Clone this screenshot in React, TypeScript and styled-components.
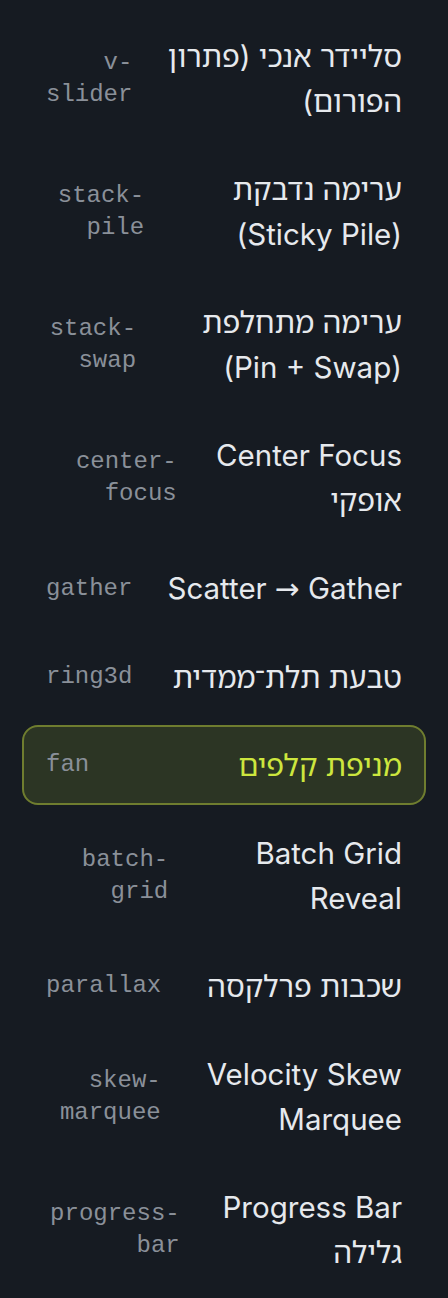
import type { ReactNode } from 'react'
import styled, { createGlobalStyle } from 'styled-components'

const GlobalStyle = createGlobalStyle`
  html, body {
    margin: 0;
    padding: 0;
    background: #161b22;
  }
  * {
    box-sizing: border-box;
  }
`

const Arrow = styled.span`
  font-family: Roboto, 'DejaVu Sans', sans-serif;
`

type Demo = {
  slug: string
  title: ReactNode
}

const demos: Demo[] = [
  { slug: 'v-slider', title: 'סליידר אנכי (פתרון הפורום)' },
  { slug: 'stack-pile', title: 'ערימה נדבקת (Sticky Pile)' },
  { slug: 'stack-swap', title: 'ערימה מתחלפת (Pin + Swap)' },
  { slug: 'center-focus', title: 'Center Focus אופקי' },
  {
    slug: 'gather',
    title: (
      <>
        Scatter <Arrow>→</Arrow> Gather
      </>
    )
  },
  { slug: 'ring3d', title: 'טבעת תלת־ממדית' },
  { slug: 'fan', title: 'מניפת קלפים' },
  { slug: 'batch-grid', title: 'Batch Grid Reveal' },
  { slug: 'parallax', title: 'שכבות פרלקסה' },
  { slug: 'skew-marquee', title: 'Velocity Skew Marquee' },
  { slug: 'progress-bar', title: 'Progress Bar גלילה' }
]

export default function App() {
  const active = 'fan'

  return (
    <>
      <GlobalStyle />
      <Page dir="rtl">
        <List>
          {demos.map(demo => (
            <Item key={demo.slug} $active={demo.slug === active}>
              <Title $active={demo.slug === active}>{demo.title}</Title>
              <Slug>{demo.slug}</Slug>
            </Item>
          ))}
        </List>
      </Page>
    </>
  )
}

const Page = styled.div`
  direction: rtl;
  min-height: 1298px;
  background: #161b22;
  padding: 16px 22px 6px;
`

const List = styled.nav`
  display: flex;
  flex-direction: column;
  gap: 8px;
`

const Item = styled.a<{ $active?: boolean }>`
  display: flex;
  align-items: center;
  justify-content: space-between;
  gap: 24px;
  padding: 15.5px 22px;
  border: 2px solid ${p => (p.$active ? '#6f7d2f' : 'transparent')};
  border-radius: 16px;
  background: ${p => (p.$active ? '#2c3524' : 'transparent')};
  cursor: pointer;
`

const Title = styled.span<{ $active?: boolean }>`
  font-family: Inter, 'Noto Sans Hebrew', 'Noto Sans', 'DejaVu Sans', sans-serif;
  font-size: 29.5px;
  line-height: 45px;
  font-weight: 400;
  color: ${p => (p.$active ? '#cde63e' : '#e6e9ed')};
  text-align: right;
`

const Slug = styled.span`
  font-family: 'Liberation Mono', 'DejaVu Sans Mono', monospace;
  font-size: 24px;
  line-height: 32px;
  color: #8a9099;
  text-align: right;
`
